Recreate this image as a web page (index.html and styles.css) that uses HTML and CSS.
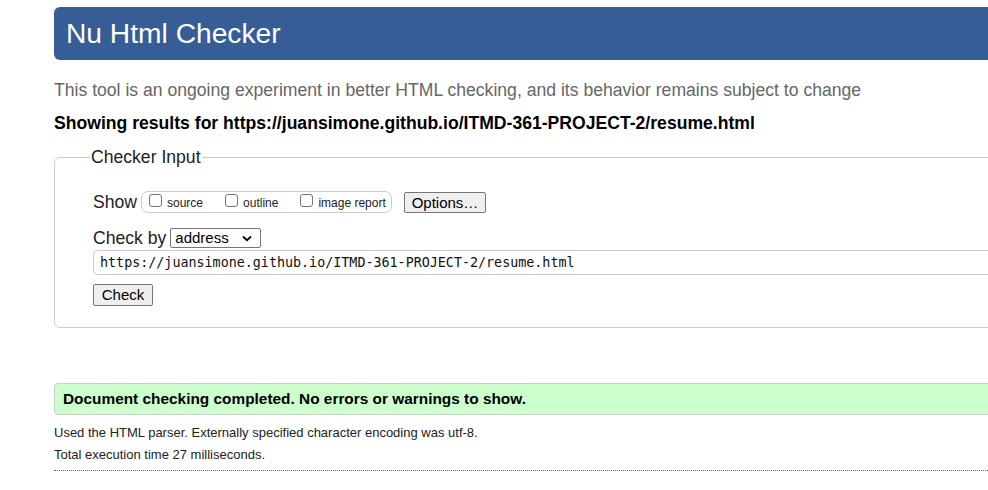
FILE: index.html
```html
<!DOCTYPE html>
<html>
<head>
<meta charset="utf-8">
<title>Nu Html Checker</title>
<link rel="stylesheet" href="styles.css">
</head>
<body>
<div class="page">
  <h1 class="title">Nu Html Checker</h1>
  <p class="intro">This tool is an ongoing experiment in better HTML checking, and its behavior remains subject to change</p>
  <p class="showing">Showing results for https://juansimone.github.io/ITMD-361-PROJECT-2/resume.html</p>
  <fieldset class="checker">
    <legend class="legend">Checker Input</legend>
    <div class="row show-row">
      <span class="label">Show</span>
      <span class="opts">
        <label class="opt"><span class="box"></span>source</label>
        <label class="opt"><span class="box"></span>outline</label>
        <label class="opt"><span class="box"></span>image report</label>
      </span>
      <span class="btn options">Options…</span>
    </div>
    <div class="row by-row">
      <span class="label">Check by</span>
      <span class="select">address<svg class="chev" width="10" height="7" viewBox="0 0 10 7"><path d="M1 1.5 L5 5.2 L9 1.5" fill="none" stroke="#000" stroke-width="1.8"/></svg></span>
    </div>
    <div class="url">https://juansimone.github.io/ITMD-361-PROJECT-2/resume.html</div>
    <span class="btn check">Check</span>
  </fieldset>
  <div class="success">Document checking completed. No errors or warnings to show.</div>
  <p class="meta">Used the HTML parser. Externally specified character encoding was utf-8.</p>
  <p class="meta">Total execution time 27 milliseconds.</p>
  <div class="rule"></div>
</div>
</body>
</html>
```
FILE: styles.css
```css
html, body {
  margin: 0;
  padding: 0;
  overflow: hidden;
  background: #fff;
}
body {
  font-family: "Liberation Sans", Arial, sans-serif;
  color: #000;
}
.page {
  padding: 7px 0 0 54px;
  width: 1000px;
}
.title {
  margin: 0;
  height: 53px;
  box-sizing: border-box;
  background: #365d95;
  color: #fff;
  border-radius: 6px;
  font-weight: normal;
  font-size: 28.2px;
  line-height: 52px;
  padding-left: 12px;
}
.intro {
  margin: 19px 0 0;
  font-size: 17.6px;
  line-height: 22px;
  color: #666;
}
.showing {
  margin: 11px 0 0;
  font-size: 17.6px;
  line-height: 22px;
  font-weight: bold;
}
.checker {
  margin: 13px 0 0;
  padding: 22px 0 21px 38px;
  border: 1px solid #ccc;
  border-radius: 6px;
  min-width: 0;
}
.legend {
  font-size: 17.6px;
  padding: 0 1px;
  margin-left: -3px;
  color: #222;
}
.row {
  display: flex;
  align-items: center;
}
.label {
  font-size: 17.6px;
  color: #222;
}
.show-row {
  height: 24px;
}
.opts {
  display: inline-flex;
  align-items: center;
  height: 22px;
  box-sizing: border-box;
  width: 251px;
  border: 1px solid #ccc;
  border-radius: 7px;
  margin-left: 4px;
  padding-left: 7px;
  gap: 22px;
}
.opt {
  display: inline-flex;
  align-items: flex-end;
  font-size: 12px;
  color: #222;
  gap: 5px;
  height: 16px;
  line-height: 14px;
}
.box {
  width: 13px;
  height: 13px;
  box-sizing: border-box;
  border: 1px solid #767676;
  border-radius: 3px;
  margin-bottom: 3px;
}
.btn {
  display: inline-block;
  box-sizing: border-box;
  border: 1px solid #767676;
  border-radius: 2px;
  background: #efefef;
  color: #000;
  font-size: 15px;
  line-height: 19px;
  text-align: center;
}
.options {
  margin-left: 12px;
  width: 82px;
  height: 21px;
}
.by-row {
  margin-top: 13px;
  height: 22px;
}
.select {
  margin-left: 4px;
  width: 91px;
  height: 20px;
  box-sizing: border-box;
  border: 1px solid #767676;
  border-radius: 2px;
  font-size: 15px;
  line-height: 18px;
  padding-left: 4px;
  display: inline-flex;
  align-items: center;
  justify-content: space-between;
  padding-right: 8px;
}
.chev {
  display: block;
}
.url {
  margin-top: 1px;
  height: 25px;
  box-sizing: border-box;
  border: 1px solid #ccc;
  border-radius: 5px;
  font-family: "DejaVu Sans Mono", "Liberation Mono", monospace;
  font-size: 13.37px;
  line-height: 23px;
  padding-left: 6px;
  color: #111;
}
.check {
  margin-top: 9px;
  width: 60px;
  height: 22px;
  font-size: 15px;
  line-height: 20px;
}
.success {
  margin-top: 55px;
  height: 32px;
  box-sizing: border-box;
  background: #ccffcc;
  border: 1px solid #ccc;
  border-radius: 4px;
  font-weight: bold;
  font-size: 15.4px;
  line-height: 30px;
  padding-left: 8px;
}
.meta {
  margin: 10px 0 0;
  font-size: 13px;
  line-height: 15px;
  color: #222;
}
.meta + .meta {
  margin-top: 7px;
}
.rule {
  margin-top: 8px;
  border-top: 1px dotted #666;
}
```
